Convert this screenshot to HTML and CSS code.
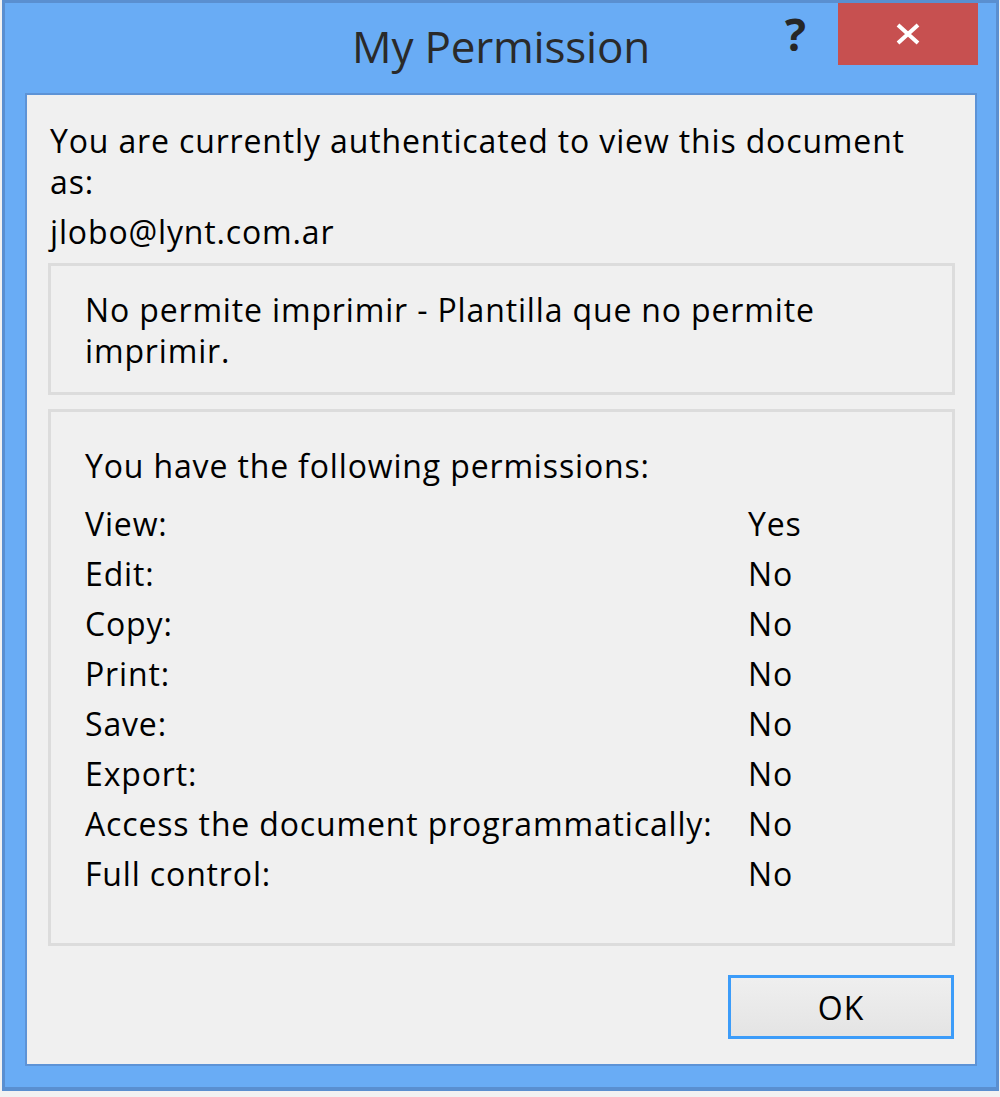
FILE: index.html
```html
<!DOCTYPE html>
<html lang="en">
<head>
    <meta charset="UTF-8">
    <title>My Permission</title>
    <link rel="stylesheet" href="styles.css">
</head>
<body>

    <div class="window">
        <!-- Title bar -->
        <div class="titlebar">
            <span class="title">My Permission</span>
            <span class="help">?</span>
            <span class="close">
                <svg width="26" height="22" viewBox="0 0 26 22">
                    <path d="M3 2 L23 20 M23 2 L3 20" stroke="#fff" stroke-width="4" fill="none"/>
                </svg>
            </span>
        </div>

        <div class="panel">
            <p class="intro">You are currently authenticated to view this document as:</p>
            <p class="user">jlobo@lynt.com.ar</p>

            <div class="group policy">
                <p>No permite imprimir - Plantilla que no permite imprimir.</p>
            </div>

            <div class="group rights">
                <p class="heading">You have the following permissions:</p>
                <div class="rows">
                    <span>View:</span><span>Yes</span>
                    <span>Edit:</span><span>No</span>
                    <span>Copy:</span><span>No</span>
                    <span>Print:</span><span>No</span>
                    <span>Save:</span><span>No</span>
                    <span>Export:</span><span>No</span>
                    <span>Access the document programmatically:</span><span>No</span>
                    <span>Full control:</span><span>No</span>
                </div>
            </div>

            <div class="buttons">
                <button>OK</button>
            </div>
        </div>
    </div>

</body>
</html>
```

FILE: styles.css
```css
* {
    margin: 0;
    padding: 0;
    box-sizing: border-box;
}

body {
    background: #f2f2f2;
    font-family: 'Open Sans', 'Noto Sans', sans-serif;
    color: #000;
}

/* Window frame */
.window {
    width: 997px;
    height: 1091px;
    margin-left: 2px;
    background: #69acf5;
    border: 3px solid #5a8fd0;
    border-bottom-width: 4px;
    padding: 0 19px 0 20px;
    display: flex;
    flex-direction: column;
}

.titlebar {
    height: 90px;
    position: relative;
    display: flex;
    justify-content: center;
    align-items: flex-start;
}

.title {
    font-size: 44px;
    font-weight: 400;
    color: #2a2a2a;
    margin-top: 15px;
    line-height: 56px;
    letter-spacing: -0.2px;
}

.help {
    position: absolute;
    left: 760px;
    top: 3px;
    font-size: 44px;
    line-height: 56px;
    font-weight: 700;
    color: #262626;
}

.close {
    position: absolute;
    left: 813px;
    top: 0;
    width: 140px;
    height: 62px;
    background: #c75050;
    display: flex;
    justify-content: center;
    align-items: center;
}

/* Dialog body */
.panel {
    flex: 1;
    margin-bottom: 21px;
    background: #f0f0f0;
    border: 2px solid #5d93d6;
    padding: 25px 20px 0 21px;
    font-size: 32px;
    line-height: 41px;
    letter-spacing: 0.85px;
}

.intro {
    padding-left: 2px;
    max-width: 900px;
}

.user {
    padding-left: 2px;
    margin-top: 9px;
}

.group {
    border: 3px solid #dcdcdc;
    padding: 0 40px 0 34px;
}

.policy {
    margin-top: 11px;
    padding-top: 23px;
    padding-bottom: 21px;
}

.rights {
    margin-top: 14px;
    padding-top: 33px;
    height: 537px;
}

.heading {
    margin-bottom: 17px;
}

.rows {
    display: grid;
    grid-template-columns: 663px auto;
    grid-auto-rows: 50px;
}

.buttons {
    display: flex;
    justify-content: flex-end;
    margin-top: 29px;
    padding-right: 1px;
}

button {
    width: 226px;
    height: 64px;
    border: 3px solid #3c9cf9;
    background: linear-gradient(#efefef, #e4e4e4);
    font-family: 'Open Sans', 'Noto Sans', sans-serif;
    font-size: 32px;
    letter-spacing: 1px;
    color: #000;
}
```
